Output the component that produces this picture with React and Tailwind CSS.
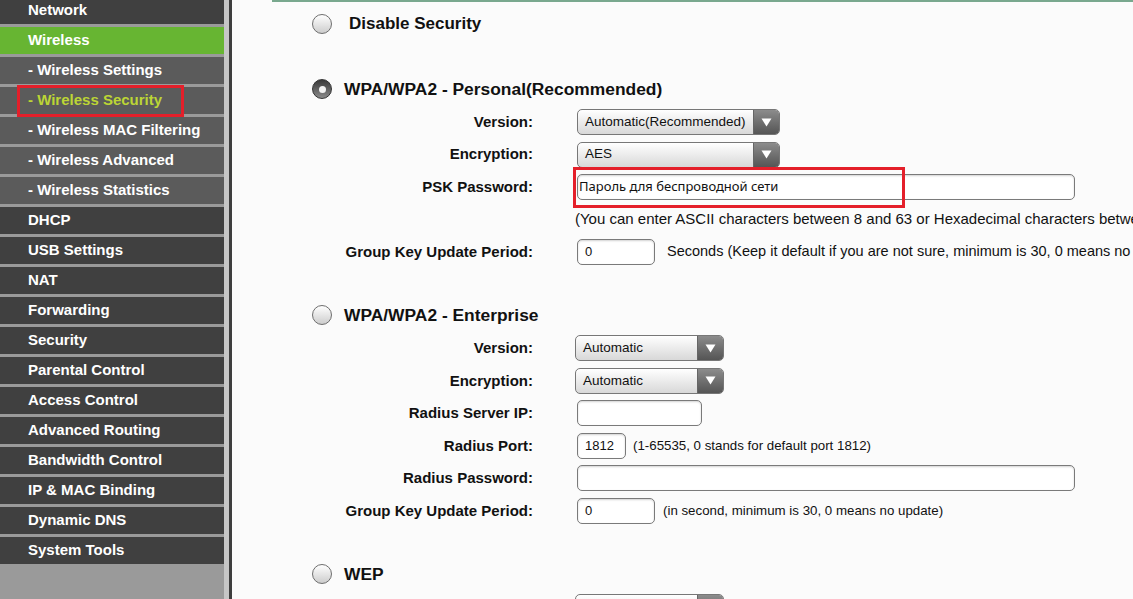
import React from "react";

const menu = [
  { t: "Network", k: "main" },
  { t: "Wireless", k: "green" },
  { t: "- Wireless Settings", k: "sub" },
  { t: "- Wireless Security", k: "sel" },
  { t: "- Wireless MAC Filtering", k: "sub" },
  { t: "- Wireless Advanced", k: "sub" },
  { t: "- Wireless Statistics", k: "sub" },
  { t: "DHCP", k: "main" },
  { t: "USB Settings", k: "main" },
  { t: "NAT", k: "main" },
  { t: "Forwarding", k: "main" },
  { t: "Security", k: "main" },
  { t: "Parental Control", k: "main" },
  { t: "Access Control", k: "main" },
  { t: "Advanced Routing", k: "main" },
  { t: "Bandwidth Control", k: "main" },
  { t: "IP & MAC Binding", k: "main" },
  { t: "Dynamic DNS", k: "main" },
  { t: "System Tools", k: "main" },
];

const bgFor = {
  main: "bg-[#404040] text-white",
  green: "bg-[#67b532] text-white",
  sub: "bg-[#5b5b5b] text-white",
  sel: "bg-[#5b5b5b] text-[#bcd535]",
};

function Radio({ checked }) {
  if (checked) {
    return (
      <span className="flex h-[20px] w-[20px] shrink-0 items-center justify-center rounded-full border border-[#333] bg-gradient-to-b from-[#3a3a3a] to-[#8a8a8a]">
        <span className="h-[7px] w-[7px] rounded-full bg-[#f2f2f2]" />
      </span>
    );
  }
  return (
    <span className="h-[20px] w-[20px] shrink-0 rounded-full border border-[#6e6e6e] bg-gradient-to-b from-white to-[#cdcdcd]" />
  );
}

function Select({ value, wClass, shift }) {
  return (
    <div
      className={`flex h-[26px] ${wClass} ${shift ? "-ml-[2px]" : ""} overflow-hidden rounded-[5px] border border-[#777] bg-gradient-to-b from-white to-[#d8d8d8]`}
    >
      <div className="flex flex-1 items-center pl-[7px] text-[13.5px] text-[#111]">{value}</div>
      <div className="flex w-[26px] items-center justify-center border-l border-[#666] bg-gradient-to-b from-[#8c8c8c] to-[#555]">
        <svg width="11" height="9" viewBox="0 0 11 9">
          <path d="M0.5 0.5 L10.5 0.5 L5.5 8.5 Z" fill="#fff" />
        </svg>
      </div>
    </div>
  );
}

function Input({ wClass, value, font }) {
  return (
    <div
      className={`flex h-[26px] ${wClass} items-center rounded-[5px] border border-[#7a7a7a] bg-white pl-[7px] shadow-[inset_0_1px_2px_rgba(0,0,0,0.18)] ${font || "text-[13px]"} text-[#111]`}
    >
      {value}
    </div>
  );
}

function Row({ label, children, hClass }) {
  return (
    <div className={`flex ${hClass || "h-[32.5px]"} items-center`}>
      <div className="w-[301px] shrink-0 text-right text-[15px] font-bold text-[#111]">{label}</div>
      <div className="ml-[44px] flex items-center whitespace-nowrap">{children}</div>
    </div>
  );
}

function Heading({ checked, children, gapClass, sizeClass }) {
  return (
    <div className="flex h-[26px] items-center pl-[80px]">
      <Radio checked={checked} />
      <span className={`${gapClass || "ml-[12px]"} ${sizeClass || "text-[17.4px]"} font-bold text-[#111]`}>
        {children}
      </span>
    </div>
  );
}

export default function App() {
  return (
    <div
      className="flex h-[599px] w-[1133px] overflow-hidden bg-[#fbfbfb]"
      style={{ fontFamily: '"Liberation Sans", Arial, sans-serif' }}
    >
      {/* Sidebar */}
      <div className="flex shrink-0">
        <div className="w-[224px] bg-[#9a9a9a]">
          <div className="-mt-[3px] flex flex-col">
            {menu.map((m) => (
              <div
                key={m.t}
                className={`relative flex h-[30px] items-start border-b-[3px] border-[#9a9a9a] ${bgFor[m.k]}`}
              >
                <div className="flex h-[27px] items-center pl-[28px] text-[15px] font-bold">{m.t}</div>
                {m.k === "sel" && (
                  <span className="absolute left-[17px] top-[-2px] h-[32px] w-[167px] border-[3px] border-[#e41f2a]" />
                )}
              </div>
            ))}
          </div>
        </div>
        <div className="w-[5px] bg-[#c6c6c6]" />
        <div className="w-[3px] bg-[#3e3e3e]" />
      </div>

      {/* Content */}
      <div className="relative min-w-0 flex-1 overflow-hidden">
        <div className="ml-[40px] h-[2px] bg-[#79a88e]" />
        <div className="pt-[9px]">
          <Heading gapClass="ml-[17px]" sizeClass="text-[17px]">
            Disable Security
          </Heading>
          <div className="mt-[39px]">
            <Heading checked>WPA/WPA2 - Personal(Recommended)</Heading>
          </div>
          <div className="mt-[3.75px]">
            <Row label="Version:">
              <Select value="Automatic(Recommended)" wClass="w-[203px]" />
            </Row>
            <Row label="Encryption:">
              <Select value="AES" wClass="w-[203px]" />
            </Row>
            <Row label="PSK Password:">
              <div className="relative">
                <Input
                  wClass="w-[498px]"
                  font="text-[13px] pl-[1px]"
                  value={
                    <span
                      style={{ fontFamily: '"Noto Sans", "Open Sans", sans-serif' }}
                      className="-ml-[6px]"
                    >
                      Пароль для беспроводной сети
                    </span>
                  }
                />
                <span className="absolute left-[-4px] top-[-7px] h-[41px] w-[332px] border-[3px] border-[#e41f2a]" />
              </div>
            </Row>
            <Row label="">
              <span className="-ml-[2px] text-[15px] text-[#111]">
                (You can enter ASCII characters between 8 and 63 or Hexadecimal characters between 8 and 64.)
              </span>
            </Row>
            <Row label="Group Key Update Period:">
              <Input wClass="w-[78px]" value="0" />
              <span className="ml-[12px] text-[14.5px] text-[#111]">
                Seconds (Keep it default if you are not sure, minimum is 30, 0 means no update)
              </span>
            </Row>
          </div>

          <div className="mt-[34px]">
            <Heading>WPA/WPA2 - Enterprise</Heading>
          </div>
          <div className="mt-[3.75px]">
            <Row label="Version:">
              <Select value="Automatic" wClass="w-[149px]" shift />
            </Row>
            <Row label="Encryption:">
              <Select value="Automatic" wClass="w-[149px]" shift />
            </Row>
            <Row label="Radius Server IP:">
              <Input wClass="w-[125px]" value="" />
            </Row>
            <Row label="Radius Port:">
              <Input wClass="w-[49px]" value="1812" />
              <span className="ml-[7px] text-[13.3px] text-[#111]">
                (1-65535, 0 stands for default port 1812)
              </span>
            </Row>
            <Row label="Radius Password:">
              <Input wClass="w-[498px]" value="" />
            </Row>
            <Row label="Group Key Update Period:">
              <Input wClass="w-[78px]" value="0" />
              <span className="ml-[8px] text-[13.3px] text-[#111]">
                (in second, minimum is 30, 0 means no update)
              </span>
            </Row>
          </div>

          <div className="mt-[34px]">
            <Heading>WEP</Heading>
          </div>
          <div className="mt-[7px] flex">
            <div className="w-[301px] shrink-0" />
            <div className="ml-[42px]">
              <Select value="" wClass="w-[149px]" />
            </div>
          </div>
        </div>
      </div>
    </div>
  );
}
